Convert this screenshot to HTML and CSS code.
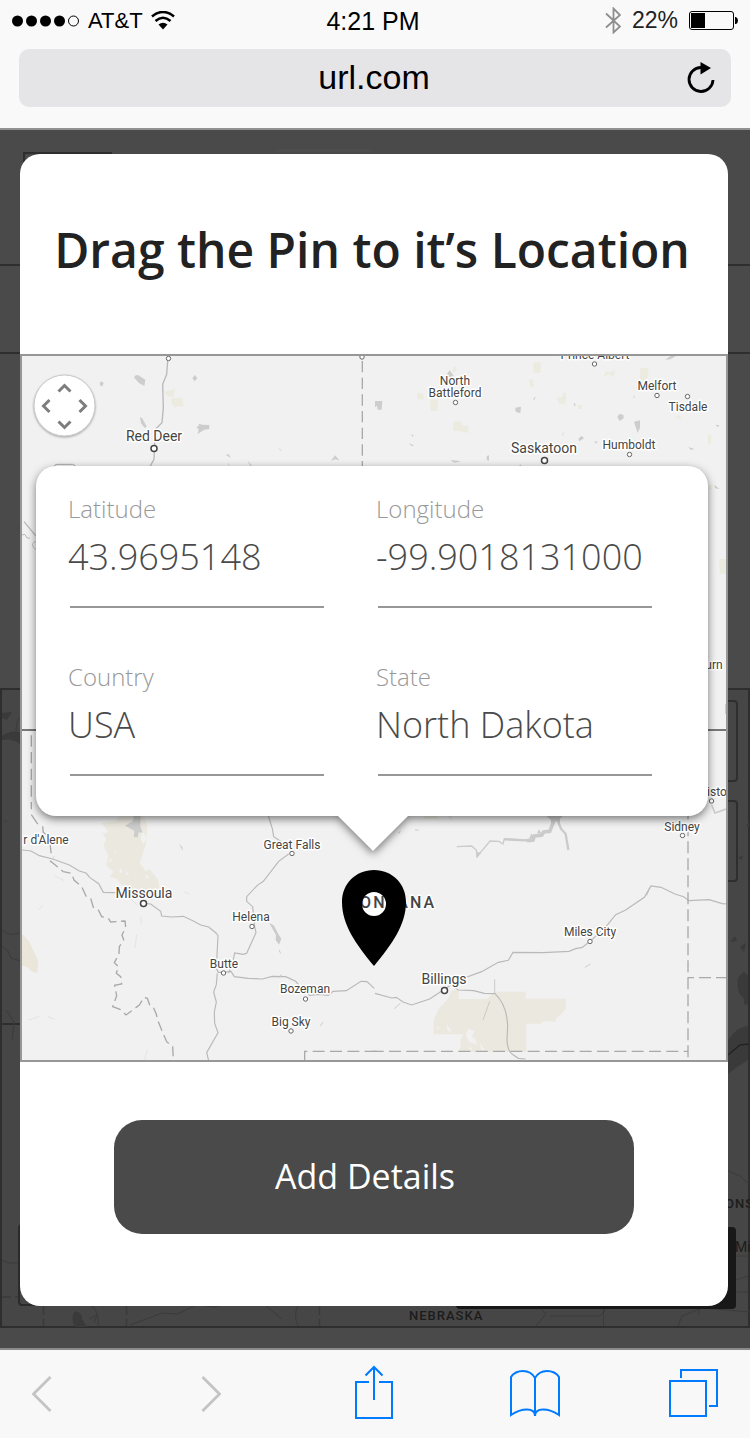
FILE: index.html
```html
<!DOCTYPE html>
<html lang="en">
<head>
<meta charset="utf-8">
<meta name="viewport" content="width=device-width, initial-scale=1">
<title>Drag the Pin to it’s Location</title>
<link rel="stylesheet" href="styles.css">
</head>
<body>
<header class="browser-top">
  <div class="status">
    <div class="status-side">
      <svg width="68" height="12" viewBox="0 0 68 12" aria-hidden="true">
        <circle cx="5.5" cy="6" r="5.5"/><circle cx="19.5" cy="6" r="5.5"/><circle cx="33.5" cy="6" r="5.5"/><circle cx="47.5" cy="6" r="5.5"/>
        <circle cx="61.5" cy="6" r="5" fill="none" stroke="#000"/>
      </svg>
      <span class="carrier">AT&amp;T</span>
      <svg width="24" height="19" viewBox="0 0 24 19" aria-hidden="true">
        <g fill="none" stroke="#000" stroke-width="2.6"><path d="M1 5.500Q12-3.500 23 5.500"/><path d="M4.500 10Q12 3.500 19.500 10"/></g>
        <path d="M7.500 13.500Q12 10 16.500 13.500L12 18.500z"/>
      </svg>
    </div>
    <span class="clock">4:21 PM</span>
    <div class="status-side status-right">
      <svg width="16" height="27" viewBox="0 0 16 27" fill="none" stroke="#8e8e8e" stroke-width="1.800" aria-hidden="true"><path d="M1 6.500L15 19.500L8.500 25.500V1.500L15 8L1 20.500"/></svg>
      <span class="percent">22%</span>
      <svg width="49" height="19" viewBox="0 0 49 19" aria-hidden="true">
        <rect x=".5" y=".5" width="44" height="18" rx="2.500" fill="none" stroke="#000"/><rect x="2" y="2" width="14" height="15"/><path d="M46 6h1q2 1 2 3.500T47 13h-1z"/>
      </svg>
    </div>
  </div>
  <div class="address">
    <input class="address-input" type="text" value="url.com" aria-label="Address">
    <button class="icon-button" type="button" aria-label="Reload">
      <svg width="28" height="32" viewBox="0 0 28 32" aria-hidden="true"><path d="M14 5.500A12 12 0 1 0 26 18" fill="none" stroke="#000" stroke-width="2.800"/><path d="M13.500 0L24 6L13.500 12.500z"/></svg>
    </button>
  </div>
</header>

<main class="stage">
  <svg class="stage-art" viewBox="0 130 750 1218" preserveAspectRatio="xMidYMin slice" aria-hidden="true">
    <g fill="none" stroke="#2e2e2e" stroke-width="2">
      <path d="M24 190V153H112M0 265H750M0 353H750"/>
      <rect x="1" y="689" width="748" height="638" fill="#464646"/>
      <rect x="640" y="701" width="97" height="80" rx="3"/>
      <rect x="640" y="801" width="97" height="80" rx="3"/>
      <path d="M2 1024H30"/>
    </g>
    <path d="M276 149h96v3h-96z" fill="#4d4d4d"/>
    <g fill="#3a3a3a">
      <path d="M2 713l10-1-5 8-5-2zM2 736q8-6 18-4v12q-8-6-18-4zM4 820l6 2-6-1z"/>
      <path d="M728 1040q10-14 20-14v34q-10 6-20 14zM738 978q6-10 10-2v28q-5 3-4-6-8-4-6-20zM730 942l5-6 2 5zM740 947l6-4-2 9zM738 858l5-3-1 5zM746 826l3-4v5z"/>
      <path d="M75 1311q8 2 7 8l5 8H75q-5-9 0-16z"/>
    </g>
    <g fill="none" stroke="#3a3a3a">
      <path d="M19 718q-6 12 0 24M2 930q10 8 18 2M2 946l6 5 3 7 9 3M6 1010l8 12-2 18M2 1260q8 5 18 2"/>
      <path d="M2 1297H20M43.500 1306v20M126.500 1306v20M319.500 1306v20" stroke-dasharray="9 4" stroke-width="1.500"/>
      <path d="M130 1325l32-12 15 1 20-9 18 2 30-7 20 5 17 14M92 1306q8 7 6 20M89 1319l8-4-3 8M298 1306q-5 8 0 20M538 1306l8 8-10 12M550 1316h50l8-10M603.500 1306v20M678 1326l4-10 20-8 48 4M699 1306v9M736 1256h13M736 1280l12-4M736 1292h12M728 1171l12 5 9 8"/>
      <path d="M728 1055l12-10 9-1" stroke="#232323" stroke-width="1.500"/>
    </g>
    <g class="region dim"><text x="409" y="1320">NEBRASKA</text><text x="725" y="1208">ONS</text><text class="town" x="735" y="1252">Mi</text></g>
    <rect x="456" y="1227" width="280" height="82" rx="4" fill="#181818"/>
    <rect x="19" y="1225" width="200" height="80" rx="3" fill="none" stroke="#2b2b2b" stroke-width="2"/>
  </svg>

  <section class="modal" role="dialog" aria-labelledby="title">
    <h1 class="title" id="title">Drag the Pin to it’s Location</h1>
    <div class="map">
      <svg class="map-art" viewBox="22 356 704 704" preserveAspectRatio="xMidYMin slice" role="img" aria-label="Map of Montana">
        <g transform="translate(0 345) scale(.33333)">
          <path d="M404 92l10-2 22 14-3 19-16-9-14-15zM299 113l6-4 6 5-4 10-6-2zM577 99l8-9 7 10-8 9zM420 217l6 2 14 25-5 6-12-15zM589 247l9-6-4-5 14 3 20 1v12l-15 2-20 13 3-14zM677 329l10-1 5 11zM683 353l6 8h-4zM742 346l14 16h-6zM993 347l12-16 13 15-12-3zM835 308l12 9-7-2z" fill="#cdcdcd"/>
          <path d="M491 140l34-8-4 24-20-3zM515 160l32-3 4 28-18-1-8 5-11-14z" fill="#ecebe0"/>
          <g fill="none" stroke="#b9b9b9" stroke-width="4"><path d="M503 48l-3 40-12 30 2 70-4 45-20 20-4 90-12 22M72 530l35 42"/><path d="M65 570l10-2 5 10 10 2M110 588q-18 8-11 15 2 12 14 8" stroke-width="3"/></g>
          <rect x="163" y="358" width="62" height="60" rx="8" fill="#f4f4f4" stroke="#aaa" stroke-width="3"/>
          <path d="M1087 48V365" class="border" stroke-dasharray="34 16"/>
        </g>
        <g transform="translate(375 345) scale(.33333)">
          <path d="M475 52h22v32h-22zM233 70l11-8v14l-8 8zM126 143l20 3-1 18-18-3zM166 162l22 3v33h-22zM234 232l21-5 8 15 17 1v20l-46-7zM462 104l10-2 7 26-14-4zM546 157l16-2 2-12h10l-3 36-20-4zM687 95l4-15 14 2 14-7-2 22-16-9zM796 68l24 2v24l-10 14-15-5zM901 221l10-11 10 12-11-3zM608 179l13 1v12h-11zM998 269h10v27h-9zM1032 642h24v44h-22zM1000 420h12v14h-12z" fill="#ecebe0"/>
          <path d="M0 168h22l-2 26H8l-2-12-6 5zM212 92l12-16 12 16-12 6zM421 188l17-3-2 20-14-5zM727 216l6-9 12 2 1 11-12 8zM777 230l18-4v22l-7 16zM610 281l10-9 7 8-14 9zM870 44l18-12 18-1-20 12zM474 163l8-9-3 10zM774 160l5-11v8zM100 293l18 9-8 1zM108 268l8 3-3 5zM226 345l32 4-20 4zM335 333l7-2v16l-7-2zM595 174l7 3-2 8zM657 289l11 1-5 6zM940 306l18 6-10 3zM1022 239l11 2-5 6zM1018 420l16 12-14-2zM561 272l6-15-3 14zM431 362l6-4 3 5z" fill="#cdcdcd"/>
        </g>
        <path d="M22 730H727" stroke="#777" stroke-width="2"/>
        <g transform="translate(0 650) scale(.33333)">
          <path d="M305 520l40-6 18-20 66 5 13 25-5 60-18 55 18 25 12-6 12 15 14 16 2 22 16 8-8 12-20-8-20 12-30 4-20-24-30-10-12-16-24-10 12-14-22-18 6-32-14-28 8-20-12-18 18-4z" fill="#ebe8df"/>
          <path d="M313 540l9 9-12 2zM402 505l-5 11 8 5zM426 540l14 24-10 20-8-16zM330 625l7 5-8 8zM360 654l8 12-9 3zM440 674l8 8-13 4zM345 600l6 7-8 2zM378 664l10 8-8 4z" fill="#f1f1f1"/>
          <path d="M402 490h20l-1 38 7 20-12-1-3 15-12-1 2-19-28-15 24-14zM537 580l10 12 1 12z" fill="#cdcdcd"/>
          <path d="M94 256V478" class="border" stroke-dasharray="34 16"/>
          <path d="M94 494l22 32 12 4 2 18 20 12" class="border" stroke-dasharray="34 16"/>
        </g>
        <g transform="translate(0 820) scale(.33333)">
          <g fill="none" stroke="#b9b9b9" stroke-width="3.500">
            <path d="M65 90l28 3 25 14 40 10 50 18 30 18 20 6 12 14 26 18 14 26 38 1M430 250l22 2 30 22 3 14 30 3 35-2 30 14 22 12 24 6 22 18 6 8-5 98 6 12h14l24-3 10 16 42 5 42 2 30-8 40 1 30 14 22 26 20 16 26-3 30 3 14-12 40-2 44-28 18 1 22 20M803-20l14 46 4 24 46 30M866 102l-30 22-46 60-18 12-32 34v14l18 16 6 60 4 18-28 62-10 3-26-4-4 20-14 40M652 460l-3 34-8 22 8 30-6 30 1 34 10 28-34 60 6 24"/>
            <path d="M165 168l28 14M112 262l6 6 12-12M390 234l20 20M422 290l2 24M410 344l-5 40M86 600l32-10M144 590l20 8M442 688l-8 32M553 216l14 6" stroke="#dcdcdc" stroke-width="2"/>
          </g>
          <path d="M808 309l13 7 15 28 8 12-7 18-10-14 1-15zM838 388l6 14-7-7zM846 462l-8 14 2-10zM958 620l12-18-4 12z" fill="#cbcbcb"/>
          <path d="M65 340l22 24 28 60-3 34-16-3-14-14-17-4z" fill="#eae6da"/>
          <path d="M150 70L154 105L162 112M150 122L190 155L215 160L222 180L245 200L258 228L272 235L280 262L295 270L305 290L325 295L332 306L375 303L377 322L366 345L371 360L358 380L357 402L343 428L355 440L349 460L362 470L365 492L344 496L350 528L338 560L360 568L378 585L418 555L432 532L442 535L450 558L460 562L468 580L475 605L485 630L500 665L518 680L520 720" class="border" stroke-dasharray="30 14"/>
          <path d="M1130 694H914V722" class="border" stroke-dasharray="36 16"/>
        </g>
        <g transform="translate(375 650) scale(.33333)">
          <g fill="none" stroke="#cbcbcb">
            <path d="M245 590L290 588L304 600L306 620L345 573L372 574L384 582L388 566L460 572" stroke-width="4"/>
            <path d="M456 572L474 570L478 558L500 556L506 546L524 544L538 510" stroke-width="11"/>
            <path d="M388 568L470 572M548 512L558 536L572 552L580 600" stroke-width="7"/>
          </g>
          <path d="M510 495h55l-10 12v14l-12-8-14 12-2-16zM303 605l3 20 12-16zM462 566l8-16 6 14zM486 550l6-12 8 14z" fill="#cbcbcb"/>
          <path d="M120 538l16 2-14 2zM68 550l10-10-4 10z" fill="#cbcbcb"/>
          <path d="M1010 465l10 24 34-12" fill="none" stroke="#cbcbcb" stroke-width="5"/>
          <path d="M146 494h42v12h-42zM216 494h14v20z" fill="#ebe8df"/>
        </g>
        <g transform="translate(375 820) scale(.33333)">
          <path d="M232 510l20 2-1 25h84l24-22h93v21h120v30q-14 20-26 26l-6 14-12-3-26 2-2 6h-46v84H252q8-20 4-36l10-16H176v-40l12-32 28-32z" fill="#ebe8df"/>
          <path d="M282 626l18 8-10 16 10 4 6 20-24-8-10-24zM216 612l8 14 6 14-14-12zM186 618l8 5-6 8zM316 668l14 24-12-4zM286 678l6 12-10-2z" fill="#f1f1f1"/>
          <g fill="none" stroke="#b9b9b9" stroke-width="3.500">
            <path d="M0 520l50 14 14-2 20 14 26 9 54-18 60-40 46-24 50-18 50-28 30-6 14-24 90 1 78-4 20-8 20-4 30-24 46-44 24-30 30-14 56-38 20-34 30 4 42 20 26 8 16 12 60-3 40 12 14 1M230 498l20 12 46 2 32 8 32 1q36 34 38 98l-2 42q2 30 14 40l20 14 22 2"/>
            <path d="M359 478v44M344 544l-20 56M824 202l-8 24M58 566l18-16M630 442l16-10" stroke-width="2"/>
          </g>
          <path d="M939-20V722M939 473H1056" class="border" stroke-dasharray="36 15" stroke-dashoffset="18"/>
          <path d="M-10 694H939" class="border" stroke-dasharray="36 16"/>
        </g>

        <g class="dots">
          <circle cx="168.500" cy="358.500" r="2.200"/><circle cx="362" cy="357" r="2.200"/><circle cx="455.500" cy="402.500" r="2.200"/><circle cx="594.500" cy="364" r="2.200"/><circle cx="657" cy="395.500" r="2.200"/><circle cx="687.500" cy="396.500" r="2.200"/><circle cx="629.500" cy="454.500" r="2.200"/><circle cx="292" cy="853.500" r="2.200"/><circle cx="682.500" cy="835.500" r="2.200"/><circle cx="711.500" cy="801" r="2.200"/><circle cx="252" cy="926.500" r="2.200"/><circle cx="223.500" cy="973" r="2.200"/><circle cx="305.500" cy="999" r="2.200"/><circle cx="291" cy="1031" r="2.200"/><circle cx="590" cy="941.500" r="2.200"/>
          <g class="big"><circle cx="154" cy="448.500" r="3"/><circle cx="544.500" cy="460.500" r="3"/><circle cx="143.500" cy="903.500" r="3"/><circle cx="444.500" cy="990.500" r="3"/></g>
        </g>
        <circle cx="374" cy="904" r="14" fill="#fff"/>
        <g class="city">
          <text x="455" y="385">North</text><text x="455" y="397">Battleford</text><text x="595" y="359">Prince Albert</text><text x="657" y="390">Melfort</text><text x="688" y="411">Tisdale</text><text x="629" y="449">Humboldt</text><text x="292" y="849">Great Falls</text><text x="46" y="844">r d'Alene</text><text x="682" y="831">Sidney</text><text x="717" y="796">isto</text><text x="714" y="669">urn</text><text x="251" y="921">Helena</text><text x="224" y="968">Butte</text><text x="305" y="993">Bozeman</text><text x="291" y="1026">Big Sky</text><text x="590" y="936">Miles City</text>
          <g class="large"><text x="154" y="441">Red Deer</text><text x="544" y="453">Saskatoon</text><text x="144" y="898">Missoula</text><text x="444" y="984">Billings</text></g>
        </g>
        <g class="region state"><text x="436" y="908">MONTANA</text></g>
        <path class="pin" fill-rule="evenodd" d="M374 870c-18.500 0-32 14-32 32 0 23 14 42 32 64 18-22 32-41 32-64 0-18-13.500-32-32-32zM374 892a12 12 0 1 1 0 24 12 12 0 0 1 0-24z"/>
        <path d="M726 704v10" stroke="#aaa"/>
        <g class="pan"><circle cx="64.500" cy="405.500" r="30.500"/><path d="M58.500 391.500l6-6 6 6M58.500 421.500l6 6 6-6M49.500 400l-6 6 6 6M79.500 400l6 6-6 6"/></g>
      </svg>
      <form class="popover">
        <div class="field"><label class="label" for="lat">Latitude</label><input class="value" id="lat" type="text" value="43.9695148"></div>
        <div class="field"><label class="label" for="lng">Longitude</label><input class="value" id="lng" type="text" value="-99.9018131000"></div>
        <div class="field"><label class="label" for="country">Country</label><input class="value" id="country" type="text" value="USA"></div>
        <div class="field"><label class="label" for="state">State</label><input class="value" id="state" type="text" value="North Dakota"></div>
      </form>
    </div>
    <div class="actions"><button class="primary" type="button">Add Details</button></div>
  </section>
</main>

<nav class="toolbar" aria-label="Browser">
  <button class="icon-button" type="button" aria-label="Back"><svg width="20" height="36" viewBox="0 0 20 36" fill="none" stroke="#c4c4c4" stroke-width="2.800"><path d="M18.500 1L1.500 18L18.500 35"/></svg></button>
  <button class="icon-button" type="button" aria-label="Forward"><svg width="20" height="36" viewBox="0 0 20 36" fill="none" stroke="#c4c4c4" stroke-width="2.800"><path d="M1.500 1L18.500 18L1.500 35"/></svg></button>
  <button class="icon-button" type="button" aria-label="Share"><svg width="38" height="58" viewBox="0 0 38 58" fill="none" stroke="#007aff" stroke-width="2"><path d="M14 17H1V53H37V17H24M19 35V2M10.500 10.500L19 2L27.500 10.500"/></svg></button>
  <button class="icon-button" type="button" aria-label="Bookmarks"><svg width="50" height="48" viewBox="0 0 50 48" fill="none" stroke="#007aff" stroke-width="2"><path d="M25 8V46M25 8Q21 1 13 1T1 7V45Q9 39.500 17 39.500T25 46Q25 39.500 33 39.500T49 45V7Q45 1 37 1T25 8"/></svg></button>
  <button class="icon-button" type="button" aria-label="Tabs"><svg width="49" height="50" viewBox="0 0 49 50" fill="none" stroke="#007aff" stroke-width="2"><rect x="1" y="12" width="36" height="35"/><path d="M12 9V1H48V37H40"/></svg></button>
</nav>
</body>
</html>
```
FILE: styles.css
```css
*, *::before, *::after { box-sizing: border-box; }

body {
  margin: 0;
  background: #f8f8f8;
  color: #000;
  font-family: "Open Sans", sans-serif;
}

button, input { margin: 0; padding: 0; border: 0; background: none; font: inherit; color: inherit; }
svg { display: block; }

.icon-button { display: block; cursor: pointer; }

/* Browser chrome */
.browser-top {
  padding-bottom: 21px;
  border-bottom: 2px solid #919191;
  background: #f9f9f9;
  font-family: "Liberation Sans", Arial, sans-serif;
}

.status {
  display: grid;
  grid-template-columns: 1fr auto 1fr;
  align-items: center;
  height: 41px;
  margin-bottom: 8px;
  padding: 0 12px;
}
.status-side { display: flex; align-items: center; gap: 8px; }
.status-right { justify-content: flex-end; gap: 11px; }
.carrier { font-size: 22px; }
.clock { padding-right: 4px; font-size: 25px; line-height: 28px; }
.percent { color: #222; font-size: 23px; }

.address {
  display: grid;
  grid-template-columns: 1fr 28px;
  align-items: center;
  height: 58px;
  margin: 0 19px;
  padding: 0 16px 0 42px;
  border-radius: 10px;
  background: #e5e5e7;
}
.address-input { width: 100%; padding-bottom: 2px; font-size: 34px; text-align: center; }

/* Dimmed page behind the dialog */
.stage {
  position: relative;
  padding: 24px 22px 42px 20px;
  border-bottom: 2px solid #8a8a8a;
  background: #4a4a4a;
}
.stage-art { position: absolute; inset: 0; width: 100%; height: 100%; }

.modal {
  position: relative;
  border-radius: 20px;
  background: #fff;
}
.title {
  margin: 0;
  padding: 64px 4px 72px 0;
  color: #222;
  font-size: 48px;
  font-weight: 600;
  line-height: 64px;
  text-align: center;
}

/* Map */
.map {
  position: relative;
  aspect-ratio: 1;
  padding: 110px 18px 0 14px;
  border: 2px solid #979797;
  background: #f1f1f1;
}
.map-art { position: absolute; inset: 0; width: 100%; height: 100%; }

.border { fill: none; stroke: #a9a9a9; stroke-width: 4; }
.dots { fill: #fff; stroke: #666; stroke-width: 1; }
.big { stroke: #444; stroke-width: 1.5; }
.city, .region {
  fill: #444;
  stroke: #fff;
  stroke-width: 3px;
  stroke-linejoin: round;
  paint-order: stroke;
  font-family: Roboto, sans-serif;
}
.city { font-size: 12px; text-anchor: middle; }
.large { font-size: 14px; }
.region { font-size: 13px; font-weight: 500; letter-spacing: 1px; }
.dim { fill: #1c1c1c; stroke: none; }
.town { font-size: 14px; font-weight: 400; letter-spacing: 0; }
.state { font-size: 16px; letter-spacing: 2px; text-anchor: end; }
.pin { fill: #000; }
.pan { fill: none; stroke: #7d7d7d; stroke-width: 3; }
.pan circle {
  fill: #fff;
  stroke: #c8c8c8;
  stroke-width: 1;
  filter: drop-shadow(0 1px 1px rgba(0, 0, 0, .3));
}

/* Coordinates popover */
.popover {
  position: relative;
  display: grid;
  grid-template-columns: 256fr 276fr;
  gap: 53px 52px;
  padding: 27px 56px 40px 32px;
  border-radius: 20px;
  background: #fff;
  filter: drop-shadow(0 3px 4px rgba(0, 0, 0, .5));
}
.popover::after {
  content: "";
  position: absolute;
  top: 100%;
  left: 50%;
  width: 70px;
  height: 35px;
  margin-left: -34px;
  background: #fff;
  clip-path: polygon(0 0, 100% 0, 50% 100%);
}
.field { min-width: 0; font-weight: 300; }
.field::after {
  content: "";
  display: block;
  height: 2px;
  margin: 19px 0 0 2px;
  background: #979797;
}
.label { display: block; color: #999; font-size: 24px; line-height: 32px; }
.value { display: block; width: 100%; height: 62px; color: #4a4a4a; font-size: 36px; }

.actions { padding: 58px 94px 72px; }
.primary {
  display: block;
  width: 100%;
  height: 114px;
  padding: 0 18px 2px 0;
  border-radius: 28px;
  background: #4a4a4a;
  color: #fff;
  font-size: 34px;
  cursor: pointer;
}

/* Bottom toolbar */
.toolbar {
  display: grid;
  grid-template-columns: 169fr 153fr 155fr 159fr 49px;
  align-items: center;
  height: 88px;
  padding: 0 32px;
  background: #f8f8f8;
}
```
